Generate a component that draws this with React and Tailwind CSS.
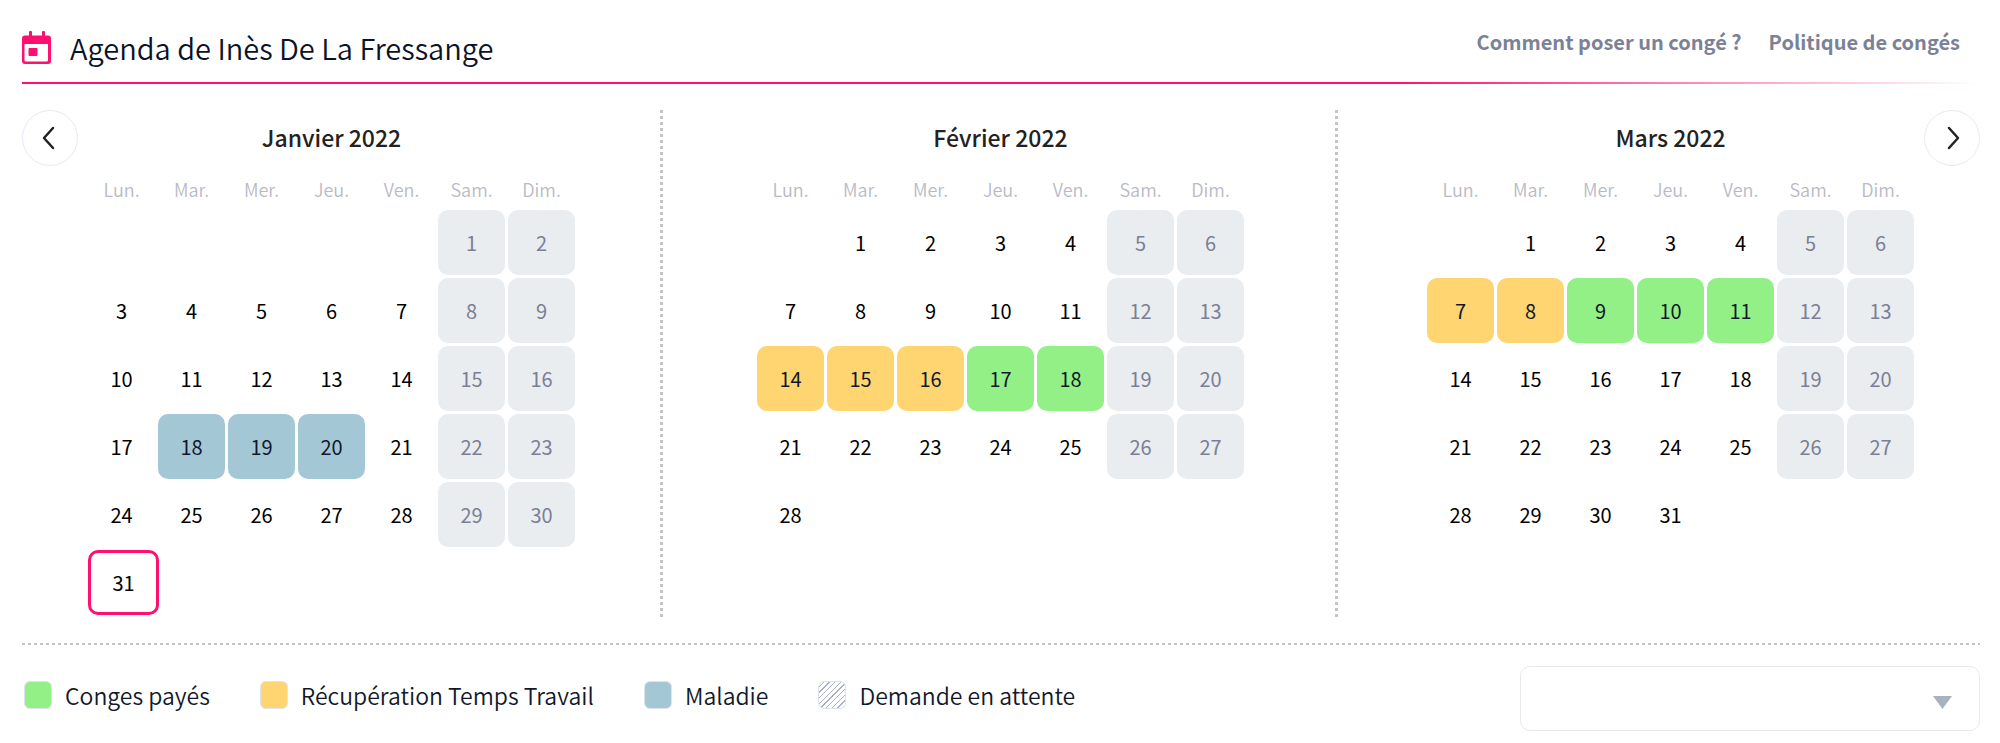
import React, { useState } from "react";

const WEEKDAYS = ["Lun.", "Mar.", "Mer.", "Jeu.", "Ven.", "Sam.", "Dim."];

// offset = number of empty cells before the 1st (week starts on monday)
const MONTHS = [
  {
    name: "Janvier 2022",
    offset: 5,
    days: 31,
    today: 31,
    leaves: { 18: "sick", 19: "sick", 20: "sick" },
  },
  {
    name: "Février 2022",
    offset: 1,
    days: 28,
    leaves: { 14: "rtt", 15: "rtt", 16: "rtt", 17: "paid", 18: "paid" },
  },
  {
    name: "Mars 2022",
    offset: 1,
    days: 31,
    leaves: { 7: "rtt", 8: "rtt", 9: "paid", 10: "paid", 11: "paid" },
  },
];

const LEAVE_STYLES = {
  paid: "bg-[#92f087]",
  rtt: "bg-[#ffd571]",
  sick: "bg-[#a4c7d6]",
  pending:
    "bg-[repeating-linear-gradient(135deg,#fff_0px,#fff_3px,#a9b0c6_3px,#a9b0c6_4px)]",
};

const LEGEND = [
  { type: "paid", label: "Conges payés" },
  { type: "rtt", label: "Récupération Temps Travail" },
  { type: "sick", label: "Maladie" },
  { type: "pending", label: "Demande en attente" },
];

function buildWeeks({ offset, days }) {
  const cells = [];
  for (let i = 0; i < offset; i++) cells.push(null);
  for (let d = 1; d <= days; d++) cells.push(d);
  while (cells.length % 7 !== 0) cells.push(null);

  const weeks = [];
  for (let i = 0; i < cells.length; i += 7) weeks.push(cells.slice(i, i + 7));
  return weeks;
}

function dayClass(month, day, col) {
  const leave = month.leaves[day];
  if (leave) return `${LEAVE_STYLES[leave]} text-[#12182b]`;
  if (day && col >= 5) return "bg-[#e9edf0] text-[#7b7f96]";
  return "text-black";
}

function CalendarIcon() {
  return (
    <svg className="h-[33px] w-[29px]" viewBox="0 0 29 33" fill="#ff0f6f" aria-hidden="true">
      <rect x="7" y="0" width="3" height="7" rx="1" />
      <rect x="20" y="0" width="3" height="7" rx="1" />
      <path
        fillRule="evenodd"
        d="M3 4.500h23a3 3 0 0 1 3 3V30a3 3 0 0 1-3 3H3a3 3 0 0 1-3-3V7.500a3 3 0 0 1 3-3zM2.500 13v16a1.500 1.500 0 0 0 1.500 1.500h20.500a1.500 1.500 0 0 0 1.500-1.500V13z"
      />
      <rect x="6.500" y="17" width="9" height="8" rx="1" />
    </svg>
  );
}

function NavButton({ label, path }) {
  return (
    <button
      type="button"
      aria-label={label}
      className="flex h-14 w-14 shrink-0 items-center justify-center rounded-full border border-[#e6eaf4] bg-white"
    >
      <svg
        className="h-6 w-6"
        viewBox="0 0 24 24"
        fill="none"
        stroke="#222"
        strokeWidth="2.500"
        strokeLinecap="round"
        strokeLinejoin="round"
      >
        <path d={path} />
      </svg>
    </button>
  );
}

function Month({ month }) {
  return (
    <table className="w-[493px] shrink-0 table-fixed border-separate border-spacing-[3px] self-start text-center">
      <caption className="h-[58px] text-[23px] leading-[54px] font-medium text-[#222]">
        {month.name}
      </caption>
      <thead>
        <tr>
          {WEEKDAYS.map((day) => (
            <th
              key={day}
              scope="col"
              className="h-9 p-0 text-lg leading-6 font-[350] text-[#b9bac6]"
            >
              {day}
            </th>
          ))}
        </tr>
      </thead>
      <tbody>
        {buildWeeks(month).map((week, i) => (
          <tr key={i}>
            {week.map((day, col) => (
              <td
                key={col}
                className={`h-[65px] rounded-[10px] p-0 text-xl leading-6 ${dayClass(month, day, col)}`}
              >
                {day && day === month.today ? (
                  <span className="-mr-1 flex h-[65px] items-center justify-center rounded-[10px] border-[3px] border-[#ff0f6f]">
                    {day}
                  </span>
                ) : (
                  day
                )}
              </td>
            ))}
          </tr>
        ))}
      </tbody>
    </table>
  );
}

function Divider() {
  return (
    <div className="w-[3px] shrink-0 bg-[repeating-linear-gradient(180deg,#c4c4c4_0px,#c4c4c4_3px,transparent_3px,transparent_6px)]" />
  );
}

export default function App() {
  const [filter, setFilter] = useState("");

  return (
    <div className="bg-white pt-6 pr-5 pb-3 pl-[22px] font-['Noto_Sans_CJK_SC','Noto_Sans',sans-serif]">
      <header className="flex h-[58px] items-start justify-between">
        <div className="flex items-center gap-[19px]">
          <CalendarIcon />
          <h1 className="text-[29px] leading-[46px] font-[350] text-[#0c1227]">
            Agenda de Inès De La Fressange
          </h1>
        </div>
        <nav className="flex gap-[27px] pr-5 text-xl leading-9 font-semibold text-[#7b8297]">
          <a href="#aide">Comment poser un congé ?</a>
          <a href="#politique">Politique de congés</a>
        </nav>
      </header>
      <div className="h-[2px] bg-gradient-to-r from-[#ff0f6f] from-70% to-transparent" />

      <main className="mt-[26px] flex">
        <div className="flex items-start gap-[7px] pr-[82px]">
          <NavButton label="Mois précédent" path="M15 2 6 12l9 10" />
          <Month month={MONTHS[0]} />
        </div>
        <Divider />
        <div className="flex flex-1 justify-center pl-[3px]">
          <Month month={MONTHS[1]} />
        </div>
        <Divider />
        <div className="flex items-start gap-[7px] pl-[86px]">
          <Month month={MONTHS[2]} />
          <NavButton label="Mois suivant" path="m9 2 9 10-9 10" />
        </div>
      </main>

      <div className="mt-[25px] h-[2px] bg-[repeating-linear-gradient(90deg,#c4c4c4_0px,#c4c4c4_3px,transparent_3px,transparent_6px)]" />

      <footer className="mt-[21px] flex items-center justify-between">
        <ul className="mb-2 flex gap-[50px] pl-[2px]">
          {LEGEND.map(({ type, label }) => (
            <li key={type} className="flex items-center gap-[13px]">
              <span className={`h-7 w-7 rounded-md border border-[#dfe3ee] ${LEAVE_STYLES[type]}`} />
              <span className="text-[23px] leading-8 font-[350] text-[#12182b]">{label}</span>
            </li>
          ))}
        </ul>
        <div className="relative w-[460px]">
          <select
            aria-label="Type de congé"
            value={filter}
            onChange={(e) => setFilter(e.target.value)}
            className="block h-[65px] w-full appearance-none rounded-[10px] border border-[#e9e9e9] bg-white px-5 text-xl"
          >
            <option value=""></option>
            {LEGEND.map(({ type, label }) => (
              <option key={type} value={type}>
                {label}
              </option>
            ))}
          </select>
          <svg
            className="pointer-events-none absolute top-[30px] right-7 h-[13px] w-[19px]"
            viewBox="0 0 19 13"
            fill="#a9b2bf"
            aria-hidden="true"
          >
            <path d="M0 0h19L9.500 13z" />
          </svg>
        </div>
      </footer>
    </div>
  );
}
